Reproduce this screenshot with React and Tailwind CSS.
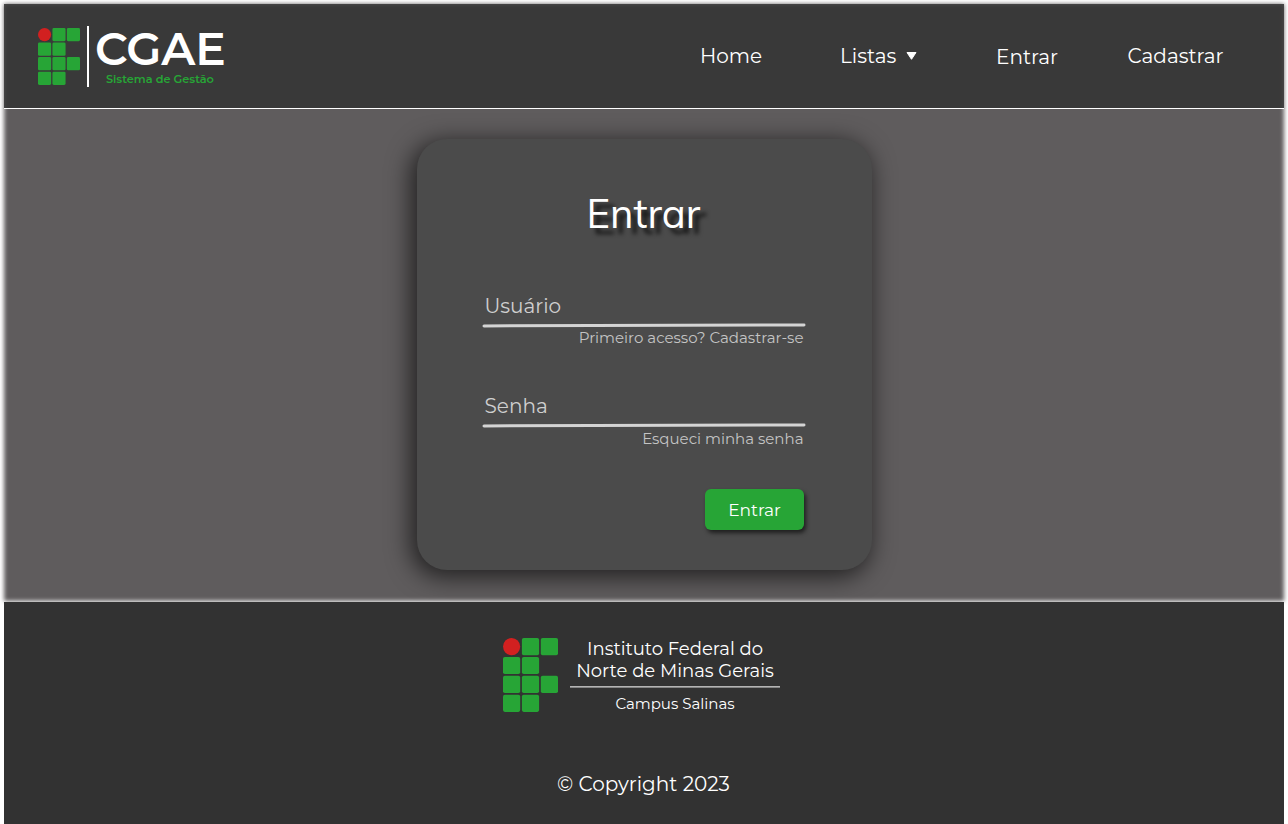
function Logo({ className }) {
  const cells = [[1, 0], [2, 0], [0, 1], [1, 1], [0, 2], [1, 2], [2, 2], [0, 3], [1, 3]];
  return (
    <svg className={className} viewBox="0 0 55 74" preserveAspectRatio="none" aria-hidden="true">
      <circle cx="8.6" cy="8.6" r="8.6" fill="#d22020" />
      {cells.map(([c, r]) => (
        <rect key={`${c}-${r}`} x={c * 18.9} y={r * 18.9} width="17.2" height="17.2" rx="1.8" fill="#27a536" />
      ))}
    </svg>
  );
}

function Field({ label, hint, className, hintClassName }) {
  return (
    <div className={className}>
      <div className="h-[28px] pl-[1.5px] text-[20px] leading-[28px] text-[#cfcfcf]">{label}</div>
      <svg className="-ml-px mt-[2px] block h-[6px] w-[324px]" viewBox="0 0 324 6" aria-hidden="true">
        <line x1="2" y1="3.9" x2="322" y2="2.9" stroke="#d4d4d4" strokeWidth="3" strokeLinecap="round" />
      </svg>
      <div className={`pr-[0.5px] text-right text-[15px] leading-[20px] text-[#c4c4c4] ${hintClassName}`}>{hint}</div>
    </div>
  );
}

export default function App() {
  return (
    <div className="relative isolate flex h-[824px] w-[1288px] flex-col overflow-hidden bg-white px-1 pt-1 font-['Montserrat','Inter',sans-serif] font-normal text-white">
      <div className="absolute left-1 top-1 -z-10 h-[597px] w-[1280px] bg-[#5f5c5d] blur-[2px]" />
      <header className="flex h-[105px] shrink-0 border-b border-white bg-[#333333]/86">
        <div className="flex pl-[34px] pt-[22px]">
          <Logo className="mt-[2px] h-[57px] w-[42px]" />
          <div className="ml-[7px] h-[61px] w-[2px] bg-white" />
          <div className="ml-[6px] w-[132px]">
            <div className="h-[46px] whitespace-nowrap text-[45.5px] font-semibold leading-[46px]">CGAE</div>
            <div className="pl-[11px] text-[11.3px] font-semibold leading-[14px] text-[#27a536]">Sistema de Gestão</div>
          </div>
        </div>
        <nav className="ml-auto flex pr-[61px] pt-[38px] text-[20px] leading-[28px]">
          <a className="w-[140px]">Home</a>
          <a className="flex w-[156px]">
            <span className="w-[66px]">Listas</span>
            <svg className="mt-[10px] h-[8px] w-[11px]" viewBox="0 0 11 8" aria-hidden="true">
              <path d="M1 .5h9L5.5 7.3z" fill="white" stroke="white" strokeWidth="1" strokeLinejoin="round" />
            </svg>
          </a>
          <a className="w-[131px] pt-px">Entrar</a>
          <a className="w-[96px] pl-[0.5px]">Cadastrar</a>
        </nav>
      </header>
      <main className="flex h-[493px] shrink-0 justify-center pt-[30px]">
        <section className="ml-px flex h-[431px] w-[455px] flex-col rounded-[30px] bg-[#4b4b4b] pl-[66px] pr-[68px] shadow-[-4px_5px_25px_2px_rgba(0,0,0,0.65)]">
          <h1 className="mt-[49px] h-[50px] text-center font-['Mulish','Muli','Nunito','Montserrat',sans-serif] text-[40px] font-normal leading-[50px] [text-shadow:6px_6px_4px_rgba(0,0,0,0.75)]">Entrar</h1>
          <Field label="Usuário" hint="Primeiro acesso? Cadastrar-se" className="mt-[54px] h-[100px]" hintClassName="mt-0" />
          <Field label="Senha" hint="Esqueci minha senha" className="h-[97px]" hintClassName="mt-[1px]" />
          <button className="h-[41px] w-[99px] self-end rounded-[6px] bg-[#27a536] pt-[2px] text-[17px] shadow-[2px_3px_4px_rgba(0,0,0,0.6)]">Entrar</button>
        </section>
      </main>
      <footer className="flex grow flex-col items-center bg-[#323232]">
        <div className="mr-[6px] mt-[36px] flex h-[75px]">
          <Logo className="h-[74px] w-[55px]" />
          <div className="ml-[12px] flex w-[210px] flex-col text-center">
            <div className="h-[49px] shrink-0 whitespace-nowrap border-b border-[#b4b4b4] pl-px text-[18px] leading-[22px] shadow-[0_1px_0_#858585]">
              <div>Instituto Federal do</div>
              <div>Norte de Minas Gerais</div>
            </div>
            <div className="mt-[7px] pl-px text-[15px] leading-[20px]">Campus Salinas</div>
          </div>
        </div>
        <p className="mr-px mt-[57px] text-[20px] leading-[28px]">© Copyright 2023</p>
      </footer>
    </div>
  );
}
